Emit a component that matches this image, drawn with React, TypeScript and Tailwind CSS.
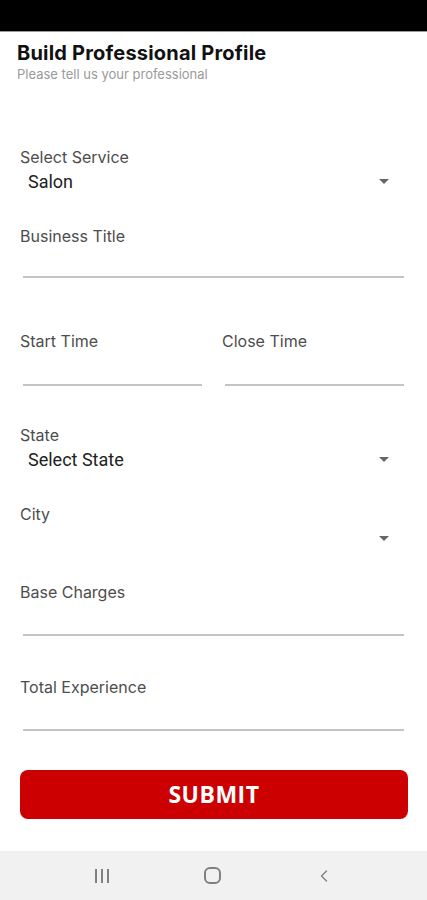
import { ChevronLeft } from "lucide-react";

const labelFont = { fontFamily: "Inter, 'Noto Sans', sans-serif" };

function Label({ text }: { text: string }) {
    return (
        <div className="text-[16px] leading-[20px] text-[#4d4d4d]" style={labelFont}>
            {text}
        </div>
    );
}

function Arrow() {
    return (
        <svg width="10" height="5" viewBox="0 0 10 5" className="mr-[15px]">
            <path d="M0 0 L10 0 L5 5 Z" fill="#666" />
        </svg>
    );
}

function SelectField({ label, value, top }: { label: string; value?: string; top: string }) {
    return (
        <div className={top}>
            <Label text={label} />
            <div className="mt-[2px] flex items-center justify-between h-[24px] pl-2">
                <span className="text-[18px] text-[#222]" style={{ fontFamily: "Roboto, sans-serif" }}>
                    {value ?? ""}
                </span>
                <Arrow />
            </div>
        </div>
    );
}

function TextField({ label, top, inputH }: { label: string; top: string; inputH: string }) {
    return (
        <div className={top}>
            <Label text={label} />
            <div className={`${inputH} ml-[3px] border-b-[2px] border-[#c4c4c4]`} />
        </div>
    );
}

export default function App() {
    return (
        <div className="w-[427px] h-[900px] bg-white flex flex-col overflow-hidden">
            <div className="h-[32px] bg-black border-b border-[#9a9a9a]" />
            <div className="h-[115px] pl-[17px] pt-[9px]">
                <h1 className="text-[20px] leading-[24px] font-bold text-[#111] tracking-[0.2px]" style={labelFont}>
                    Build Professional Profile
                </h1>
                <p className="mt-[2px] text-[13px] leading-[14px] text-[#9a9a9a]" style={labelFont}>
                    Please tell us your professional
                </p>
            </div>
            <div className="pl-[20px] pr-[23px] flex-1 flex flex-col">
                <SelectField label="Select Service" value="Salon" top="" />
                <TextField label="Business Title" top="mt-[33px]" inputH="h-[32px]" />
                <div className="mt-[53px] flex gap-[20px]">
                    <div className="flex-1">
                        <Label text="Start Time" />
                        <div className="h-[35px] ml-[3px] border-b-[2px] border-[#c4c4c4]" />
                    </div>
                    <div className="flex-1">
                        <Label text="Close Time" />
                        <div className="h-[35px] ml-[3px] border-b-[2px] border-[#c4c4c4]" />
                    </div>
                </div>
                <SelectField label="State" value="Select State" top="mt-[39px]" />
                <SelectField label="City" top="mt-[33px]" />
                <TextField label="Base Charges" top="mt-[32px]" inputH="h-[34px]" />
                <TextField label="Total Experience" top="mt-[41px]" inputH="h-[34px]" />
                <button
                    className="mt-[39px] -mr-[4px] h-[49px] rounded-[8px] bg-[#cc0000] text-white text-[23px] font-bold tracking-[0.5px]"
                    style={{ fontFamily: "'Open Sans', sans-serif" }}
                >
                    SUBMIT
                </button>
            </div>
            <div className="h-[49px] bg-[#f1f1f1] flex items-center justify-center pr-[2px]">
                <div className="w-[111px] flex gap-[4px] justify-center">
                    <span className="w-[2px] h-[14px] bg-[#808080]" />
                    <span className="w-[2px] h-[14px] bg-[#808080]" />
                    <span className="w-[2px] h-[14px] bg-[#808080]" />
                </div>
                <div className="w-[111px] flex justify-center">
                    <div className="w-[17px] h-[17px] rounded-[6px] border-[2px] border-[#808080]" />
                </div>
                <div className="w-[111px] flex justify-center">
                    <ChevronLeft size={20} color="#808080" strokeWidth={1.6} />
                </div>
            </div>
        </div>
    );
}
